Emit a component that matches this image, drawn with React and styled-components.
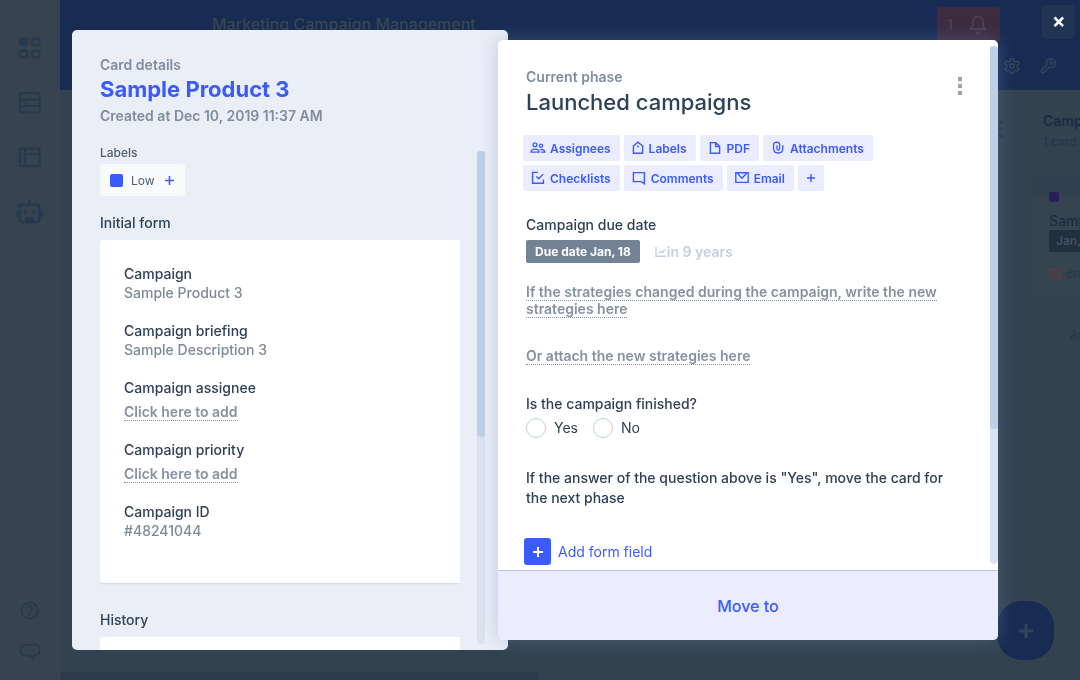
import { useState } from "react";
import styled, { createGlobalStyle } from "styled-components";
import { LuBell, LuSettings, LuWrench } from "react-icons/lu";

const TOOLS = [
    { name: "Assignees", icon: AssigneesIcon },
    { name: "Labels", icon: LabelIcon },
    { name: "PDF", icon: PdfIcon },
    { name: "Attachments", icon: ClipIcon },
    { name: "Checklists", icon: ChecklistIcon },
    { name: "Comments", icon: CommentIcon },
    { name: "Email", icon: EmailIcon },
];

const FORM = [
    { label: "Campaign", value: "Sample Product 3" },
    { label: "Campaign briefing", value: "Sample Description 3" },
    { label: "Campaign assignee" },
    { label: "Campaign priority" },
    { label: "Campaign ID", value: "#48241044" },
];

export default function App() {
    return (
        <Page>
            <GlobalStyle />
            <Sidebar />
            <Main>
                <TopBar />
                <Board />
            </Main>
            <AddCard aria-label="Add card"><PlusIcon size={14} stroke={3} /></AddCard>
            <Modal role="dialog" aria-label="Sample Product 3">
                <CardDetails />
                <CurrentPhase />
                <CloseButton aria-label="Close">
                    <svg width="12" height="12" viewBox="0 0 12 12">
                        <path d="M1.5 1.5l8.6 8.6M10.1 1.5l-8.6 8.6" stroke="#fff" strokeWidth="2.6" />
                    </svg>
                </CloseButton>
            </Modal>
        </Page>
    );
}

function Sidebar() {
    return (
        <Side>
            <SideGroup>
                <SideButton aria-label="Home"><GridIcon /></SideButton>
                <SideButton aria-label="Database"><DatabaseIcon /></SideButton>
                <SideButton aria-label="Portal"><PortalIcon /></SideButton>
                <SideButton aria-label="Automations"><RobotIcon /></SideButton>
            </SideGroup>
            <SideFooter>
                <SideButton $small aria-label="Help"><HelpIcon /></SideButton>
                <SideButton $small aria-label="Chat"><ChatIcon /></SideButton>
            </SideFooter>
        </Side>
    );
}

function TopBar() {
    return (
        <Header>
            <TitleRow>
                <PipeTitle>Marketing Campaign Management</PipeTitle>
                <Notifications>1 <LuBell size={20} /></Notifications>
            </TitleRow>
            <ToolRow>
                <HeaderButton aria-label="Settings"><LuSettings size={18} /></HeaderButton>
                <HeaderButton aria-label="Tools"><LuWrench size={18} /></HeaderButton>
            </ToolRow>
        </Header>
    );
}

function Board() {
    return (
        <BoardArea>
            <Columns>
                <Kebab $color="#26364b"><i /><i /><i /></Kebab>
                <Column>
                    <ColumnHead>
                        <h2>Campaign</h2>
                        <p>1 card</p>
                    </ColumnHead>
                    <BoardCard>
                        <Swatch $size={10} $color="#2a2057" />
                        <h3>Sample Product</h3>
                        <BoardDate>Jan, 18</BoardDate>
                        <BoardTime>
                            <svg width="12" height="12" viewBox="0 0 12 12" fill="none">
                                <path d="M1 1h10v10H1zM5.5 3.5v3H8" stroke="#593a4b" strokeWidth="1.8" />
                            </svg>
                            6m
                        </BoardTime>
                    </BoardCard>
                    <Average>Average</Average>
                </Column>
            </Columns>
            <BoardScroll />
        </BoardArea>
    );
}

function CardDetails() {
    return (
        <DetailsPanel>
            <Overline>Card details</Overline>
            <DetailsTitle>Sample Product 3</DetailsTitle>
            <Created>Created at Dec 10, 2019 11:37 AM</Created>
            <DetailsBody>
                <DetailsContent>
                    <LabelsTitle>Labels</LabelsTitle>
                    <LabelBox>
                        <Swatch $size={13} $color="#3b5bfe" />
                        Low
                        <LabelAdd aria-label="Add label"><PlusIcon size={9} stroke={1.6} /></LabelAdd>
                    </LabelBox>
                    <SectionTitle>Initial form</SectionTitle>
                    <FormCard>
                        {FORM.map((field) => (
                            <div key={field.label}>
                                <dt>{field.label}</dt>
                                {field.value
                                    ? <dd>{field.value}</dd>
                                    : <EmptyValue><DottedLink href="#">Click here to add</DottedLink></EmptyValue>}
                            </div>
                        ))}
                    </FormCard>
                    <SectionTitle $history>History</SectionTitle>
                    <HistoryCard />
                </DetailsContent>
                <Track><Thumb $share={58} /></Track>
            </DetailsBody>
        </DetailsPanel>
    );
}

function CurrentPhase() {
    const [finished, setFinished] = useState("");

    return (
        <PhasePanel>
            <PhaseBody>
                <PhaseContent>
                    <PhaseHead>
                        <div>
                            <Overline>Current phase</Overline>
                            <PhaseTitle>Launched campaigns</PhaseTitle>
                        </div>
                        <Kebab as="button" aria-label="More options" $color="#99a4b3"><i /><i /><i /></Kebab>
                    </PhaseHead>
                    <Tools>
                        {TOOLS.map(({ name, icon: Icon }) => (
                            <ToolButton key={name}><Icon />{name}</ToolButton>
                        ))}
                        <ToolButton $square aria-label="More"><PlusIcon size={8} stroke={1.4} /></ToolButton>
                    </Tools>
                    <FieldTitle>Campaign due date</FieldTitle>
                    <DueRow>
                        <DueBadge>Due date Jan, 18</DueBadge>
                        <DueIn>
                            <svg width="12" height="12" viewBox="0 0 12 12" fill="none">
                                <path d="M1 1v9.2h10M3.5 7.5l2.2-2 1.6 1L10 3.6" stroke="currentColor" strokeWidth="1.4" />
                            </svg>
                            in 9 years
                        </DueIn>
                    </DueRow>
                    <PhaseFields>
                        <LinkText>
                            <DottedLink href="#">
                                If the strategies changed during the campaign, write the new strategies here
                            </DottedLink>
                        </LinkText>
                        <LinkText><DottedLink href="#">Or attach the new strategies here</DottedLink></LinkText>
                        <Question>
                            <legend>Is the campaign finished?</legend>
                            <Choices>
                                {["Yes", "No"].map((answer) => (
                                    <label key={answer}>
                                        <input
                                            type="radio"
                                            name="finished"
                                            checked={finished === answer}
                                            onChange={() => setFinished(answer)}
                                        />
                                        {answer}
                                    </label>
                                ))}
                            </Choices>
                        </Question>
                        <FieldTitle>
                            If the answer of the question above is "Yes", move the card for the next phase
                        </FieldTitle>
                        <AddField>
                            <span><PlusIcon size={10} stroke={2} /></span>
                            Add form field
                        </AddField>
                    </PhaseFields>
                </PhaseContent>
                <Track><Thumb $share={74} /></Track>
            </PhaseBody>
            <MoveTo>Move to</MoveTo>
        </PhasePanel>
    );
}

/* icons */

function PlusIcon({ size, stroke }) {
    return (
        <svg width={size} height={size} viewBox={`0 0 ${size} ${size}`}>
            <path d={`M${size / 2} 0v${size}M0 ${size / 2}h${size}`} stroke="currentColor" strokeWidth={stroke} />
        </svg>
    );
}

function GridIcon() {
    return (
        <svg width="24" height="24" viewBox="0 0 24 24" fill="none" stroke="currentColor" strokeWidth="2.4">
            <rect x="2" y="2.8" width="7.2" height="6.6" rx="1.6" fill="currentColor" />
            <rect x="14.2" y="2.8" width="7.2" height="6.6" rx="1.6" />
            <rect x="2" y="14.8" width="7.2" height="6.6" rx="1.6" />
            <rect x="14.2" y="14.8" width="7.2" height="6.6" rx="1.6" />
        </svg>
    );
}

function DatabaseIcon() {
    return (
        <svg width="24" height="24" viewBox="0 0 24 24" fill="none" stroke="currentColor" strokeWidth="2.2">
            <rect x="2" y="2.2" width="19.6" height="19.2" rx="1.5" />
            <path d="M2 8.6h20M2 15h20" />
            <path d="M6 11.8h2M6 18.2h2" strokeWidth="1.4" />
        </svg>
    );
}

function PortalIcon() {
    return (
        <svg width="24" height="24" viewBox="0 0 24 24" fill="none" stroke="currentColor" strokeWidth="2.2">
            <rect x="2" y="2.6" width="19.6" height="17.6" rx="1" />
            <path d="M7 2.6v17.6M7 8.2h14.6" />
        </svg>
    );
}

function RobotIcon() {
    return (
        <svg width="28" height="26" viewBox="0 0 28 26" fill="none" stroke="currentColor" strokeWidth="2.6">
            <rect x="4" y="4.6" width="19.2" height="17.6" rx="2" />
            <path d="M13.6 5V1.2M1.6 10.6V16M25.6 10.6V16" strokeLinecap="round" />
            <circle cx="9.4" cy="12" r="1.9" fill="currentColor" stroke="none" />
            <circle cx="17.8" cy="12" r="1.9" fill="currentColor" stroke="none" />
            <path d="M9.8 21.8v-4.2h7.6v4.2z" fill="currentColor" strokeWidth="1" />
        </svg>
    );
}

function HelpIcon() {
    return (
        <svg width="20" height="20" viewBox="0 0 20 20" fill="none" stroke="currentColor" strokeWidth="1.8">
            <circle cx="9.6" cy="9.6" r="8.2" />
            <path d="M7 7.8c0-3.4 5-3.2 5-.2 0 1.8-2.5 1.9-2.5 4M9.5 13v1.8" />
        </svg>
    );
}

function ChatIcon() {
    return (
        <svg width="20" height="18" viewBox="0 0 20 18" fill="none" stroke="currentColor" strokeWidth="1.8">
            <path d="M6 1.6h8a5 5 0 0 1 1.2 10.8l-1.6.2v3.2l-3.8-3.2H6a5.5 5.5 0 0 1 0-11z" />
            <path d="M5.4 7.2h1.8M9.1 7.2h1.8M12.8 7.2h1.8" strokeWidth="2" />
        </svg>
    );
}

function AssigneesIcon() {
    return (
        <svg width="16" height="14" viewBox="0 0 16 14" fill="none" stroke="currentColor" strokeWidth="1.3">
            <circle cx="5" cy="3.8" r="1.9" />
            <path d="M1 11.2c0-4 8.2-4 8.2 0z" />
            <circle cx="11" cy="4.8" r="1.6" />
            <path d="M10.4 8.7c2.2-.6 4.4.4 4.6 2.5h-4" />
        </svg>
    );
}

function LabelIcon() {
    return (
        <svg width="14" height="14" viewBox="0 0 14 14" fill="none" stroke="currentColor" strokeWidth="1.4">
            <path d="M2.4 5L7 1.2 11.6 5v7.2H2.4z" />
            <circle cx="7" cy="5.4" r="1" fill="currentColor" stroke="none" />
        </svg>
    );
}

function PdfIcon() {
    return (
        <svg width="16" height="14" viewBox="-1 0 16 14" fill="none" stroke="currentColor" strokeWidth="1.4">
            <path d="M2.4 1.6h5.4l3.8 3.8v6.8H2.4zM7.6 1.8v3.8h3.8" />
        </svg>
    );
}

function ClipIcon() {
    return (
        <svg width="16" height="14" viewBox="-1 0 16 14" fill="none" stroke="currentColor" strokeWidth="1.3">
            <path d="M6 4.2v3.6c0 1.7 2.6 1.7 2.6 0V3.2c0-2.6-6-2.6-6 0v4.6c0 5.6 9.2 5.6 9.2 0V4" />
        </svg>
    );
}

function ChecklistIcon() {
    return (
        <svg width="16" height="14" viewBox="-1 0 16 14" fill="none" stroke="currentColor" strokeWidth="1.4">
            <path d="M7 1.4H1.6v10.8h10.8V8.4M5.4 5.6l2.2 2.2 4.4-4.6" />
        </svg>
    );
}

function CommentIcon() {
    return (
        <svg width="16" height="14" viewBox="-1 0 16 14" fill="none" stroke="currentColor" strokeWidth="1.4">
            <path d="M1.4 1.6h11v11.2l-3-2.2h-8z" />
        </svg>
    );
}

function EmailIcon() {
    return (
        <svg width="16" height="14" viewBox="-1 0 16 14" fill="none" stroke="currentColor" strokeWidth="1.4">
            <path d="M.8 1.8h12.4v9.6H.8zM2.6 2.6l4.4 4.6 4.4-4.6" />
        </svg>
    );
}

/* page */

const GlobalStyle = createGlobalStyle`
* {
    box-sizing: border-box;
    margin: 0;
    padding: 0;
}
body {
    font-family: Inter, "Liberation Sans", sans-serif;
    font-size: 14px;
    color: #2d4157;
    overflow: hidden;
}
button {
    border: none;
    background: none;
    font: inherit;
    cursor: pointer;
}
svg {
    display: block;
    flex-shrink: 0;
}
`;

const Page = styled.div`
display: flex;
height: 100vh;
background: #32424f;
`;

const Side = styled.nav`
width: 60px;
flex-shrink: 0;
display: flex;
flex-direction: column;
justify-content: space-between;
background: #37444f;
color: #283a4e;
`;

const SideGroup = styled.div`
display: flex;
flex-direction: column;
align-items: center;
gap: 31px;
padding-top: 36px;
`;

const SideFooter = styled(SideGroup)`
gap: 21px;
padding: 20px 0 18px;
border-top: 1px solid #34424f;
`;

const SideButton = styled.button`
height: ${(props) => (props.$small ? "20px" : "24px")};
display: flex;
align-items: center;
color: inherit;
`;

const Main = styled.div`
flex: 1;
min-width: 0;
display: flex;
flex-direction: column;
`;

const Header = styled.header`
height: 90px;
background: #182b52;
color: #33445a;
`;

const TitleRow = styled.div`
display: flex;
justify-content: space-between;
height: 42px;
padding: 7px 80px 0 152px;
`;

const PipeTitle = styled.h1`
font-size: 16px;
font-weight: 500;
line-height: 34px;
color: #36454f;
`;

const Notifications = styled.button`
display: flex;
align-items: center;
justify-content: space-between;
width: 63px;
padding: 0 12px 0 10px;
border-radius: 3px;
background: #3d2b40;
color: #4a4150;
font-weight: 500;
`;

const ToolRow = styled.div`
display: flex;
justify-content: flex-end;
align-items: center;
gap: 18px;
height: 48px;
padding-right: 23px;
`;

const HeaderButton = styled.button`
color: #33445a;
`;

const BoardArea = styled.div`
flex: 1;
min-height: 0;
display: flex;
flex-direction: column;
justify-content: space-between;
overflow: hidden;
`;

const Columns = styled.div`
display: flex;
justify-content: flex-end;
align-items: flex-start;
gap: 30px;
padding-top: 21px;
`;

const Column = styled.section`
width: 47px;
overflow: hidden;
white-space: nowrap;
color: #4a5966;
`;

const ColumnHead = styled.div`
padding-left: 10px;

    h2 {
        font-size: 14px;
        font-weight: 600;
        line-height: 20px;
        color: #1a2c42;
    }
    p {
        font-size: 12px;
        line-height: 22px;
        color: #233547;
    }
`;

const BoardCard = styled.article`
height: 122px;
margin-top: 22px;
padding: 17px 0 0 16px;
border-radius: 0 0 0 6px;
background: linear-gradient(#31414f 18%, #36444f 18%);

    h3 {
        font-size: 14px;
        font-weight: 500;
        line-height: 20px;
        margin: 9px 0 -1px;
        color: #1a2c42;
    }
`;

const BoardDate = styled.p`
width: 80px;
padding-left: 7px;
border-radius: 2px;
background: #20303f;
color: #43525f;
font-size: 12px;
font-weight: 600;
line-height: 22px;
`;

const BoardTime = styled.p`
display: flex;
align-items: center;
gap: 5px;
margin-top: 12px;
font-size: 12px;
line-height: 20px;
color: #283a4a;
`;

const Average = styled.p`
padding: 28px 0 0 37px;
font-size: 12px;
line-height: 20px;
color: #243648;
`;

const BoardScroll = styled.div`
width: 47%;
height: 8px;
border-radius: 4px;
background: #2c3b4b;
`;

const AddCard = styled.button`
position: fixed;
right: 26px;
bottom: 20px;
display: flex;
align-items: center;
justify-content: center;
width: 57px;
height: 59px;
border-radius: 25px;
background: #182b52;
color: #33445a;
`;

/* modal */

const Modal = styled.div`
position: fixed;
inset: 0;
display: grid;
grid-template-columns: minmax(0, 436fr) minmax(0, 490fr);
grid-template-rows: minmax(0, 1fr);
padding: 30px 82px 30px 72px;
`;

const CloseButton = styled.button`
position: absolute;
top: 5px;
right: 5px;
display: flex;
align-items: center;
justify-content: center;
width: 33px;
height: 34px;
border-radius: 4px;
background: #203454;
`;

const DetailsPanel = styled.section`
display: flex;
flex-direction: column;
padding: 26px 23px 0 28px;
border-radius: 5px;
background: #eaeff7;
overflow: hidden;
`;

const Overline = styled.p`
font-weight: 600;
line-height: 18px;
color: #7f8d9e;
`;

const DetailsTitle = styled.h2`
margin-top: 1px;
font-size: 22px;
font-weight: 700;
line-height: 28px;
color: #3b5bfe;
`;

const Created = styled.p`
margin-top: 3px;
font-weight: 600;
line-height: 20px;
color: #7f8d9e;
`;

const DetailsBody = styled.div`
flex: 1;
min-height: 0;
display: flex;
gap: 17px;
margin-top: 19px;
`;

const DetailsContent = styled.div`
flex: 1;
min-width: 0;
overflow: hidden;
`;

const Track = styled.div`
width: 8px;
flex-shrink: 0;
margin: 6px 0;
border-radius: 4px;
background: #dae3f1;
`;

const Thumb = styled.div`
height: ${(props) => props.$share}%;
border-radius: 4px;
background: #bfcfe7;
`;

const LabelsTitle = styled.h3`
font-size: 12px;
font-weight: 500;
line-height: 16px;
color: #4b5d72;
`;

const LabelBox = styled.div`
display: inline-flex;
align-items: center;
gap: 8px;
height: 32px;
margin-top: 3px;
padding: 0 11px 0 10px;
border-radius: 3px;
background: #f9fafc;
font-size: 12px;
color: #4b5d72;
`;

const Swatch = styled.span`
display: block;
flex-shrink: 0;
width: ${(props) => props.$size}px;
height: ${(props) => props.$size}px;
border-radius: 2px;
background: ${(props) => props.$color};
`;

const LabelAdd = styled.button`
margin-left: 2px;
color: #3b5bfe;
`;

const SectionTitle = styled.h3`
margin: ${(props) => (props.$history ? "27px" : "17px")} 0 7px;
font-size: 14px;
font-weight: 500;
line-height: 20px;
`;

const FormCard = styled.dl`
display: flex;
flex-direction: column;
gap: 19px;
padding: 24px 24px 43px;
border-radius: 3px 0 0 3px;
background: #fff;
box-shadow: 0 1px 2px #c9d5e4;

    dt {
        font-weight: 500;
        line-height: 20px;
    }
    dd {
        font-weight: 500;
        line-height: 18px;
        color: #7a899b;
    }
`;

const EmptyValue = styled.dd`
margin-top: 5px;
`;

const DottedLink = styled.a`
font-weight: 600;
text-decoration: none;
color: #8492a3;
border-bottom: 1px dotted #8492a3;
`;

const HistoryCard = styled.div`
height: 120px;
border-radius: 3px 0 0 0;
background: #fff;
`;

const PhasePanel = styled.section`
display: flex;
flex-direction: column;
margin: 10px 0 10px -10px;
border-radius: 5px;
background: #fff;
box-shadow: 0 0 20px rgba(110, 140, 185, 0.4);
overflow: hidden;
`;

const PhaseBody = styled.div`
flex: 1;
min-height: 0;
display: flex;
`;

const PhaseContent = styled.div`
flex: 1;
min-width: 0;
padding: 28px 28px 0;
overflow: hidden;
`;

const PhaseHead = styled.div`
display: flex;
justify-content: space-between;
`;

const PhaseTitle = styled.h2`
margin-top: 2px;
font-size: 22px;
font-weight: 500;
line-height: 28px;
`;

const Kebab = styled.div`
display: flex;
flex-direction: column;
justify-content: center;
gap: 3px;
height: 36px;
color: ${(props) => props.$color};

    i {
        width: 4px;
        height: 4px;
        background: currentColor;
    }
`;

const Tools = styled.div`
display: flex;
flex-wrap: wrap;
gap: 4px;
margin: 19px 0 24px -3px;
`;

const ToolButton = styled.button`
display: flex;
align-items: center;
justify-content: center;
gap: 4px;
height: 26px;
padding: 0 9px 0 7px;
${(props) => props.$square && "width: 26px; padding: 0;"}
border-radius: 2px;
background: #ebecff;
color: #3b5bfe;
font-size: 12px;
font-weight: 600;
`;

const FieldTitle = styled.h3`
font-size: 14px;
font-weight: 500;
line-height: 20px;
`;

const DueRow = styled.div`
display: flex;
align-items: center;
gap: 15px;
margin: 5px 0 20px;
`;

const DueBadge = styled.span`
padding: 0 9px;
border-radius: 2px;
background: #738295;
color: #fff;
font-size: 12px;
font-weight: 700;
line-height: 23px;
`;

const DueIn = styled.span`
display: flex;
align-items: center;
color: #c3d0e5;
font-weight: 600;
`;

const PhaseFields = styled.div`
display: flex;
flex-direction: column;
gap: 30px;
`;

const LinkText = styled.p`
line-height: 17px;
`;

const Question = styled.fieldset`
border: none;

    legend {
        font-weight: 500;
        line-height: 20px;
    }
`;

const Choices = styled.div`
display: flex;
gap: 15px;
margin-top: 4px;

    label {
        display: flex;
        align-items: center;
        gap: 8px;
        line-height: 20px;
    }
    input {
        appearance: none;
        width: 20px;
        height: 20px;
        border: 1px solid #bfcfe7;
        border-radius: 50%;
        background: #fff;
    }
    input:checked {
        border: 6px solid #3b5bfe;
    }
`;

const AddField = styled.button`
display: flex;
align-items: center;
align-self: flex-start;
gap: 7px;
margin-left: -2px;
color: #3b5bfe;

    span {
        display: flex;
        align-items: center;
        justify-content: center;
        width: 27px;
        height: 27px;
        border-radius: 3px;
        background: #3b5bfe;
        color: #fff;
    }
`;

const MoveTo = styled.button`
height: 70px;
flex-shrink: 0;
border-top: 1px solid #b9c7fb;
background: #ebecff;
color: #3b5bfe;
font-size: 16px;
font-weight: 500;
`;
